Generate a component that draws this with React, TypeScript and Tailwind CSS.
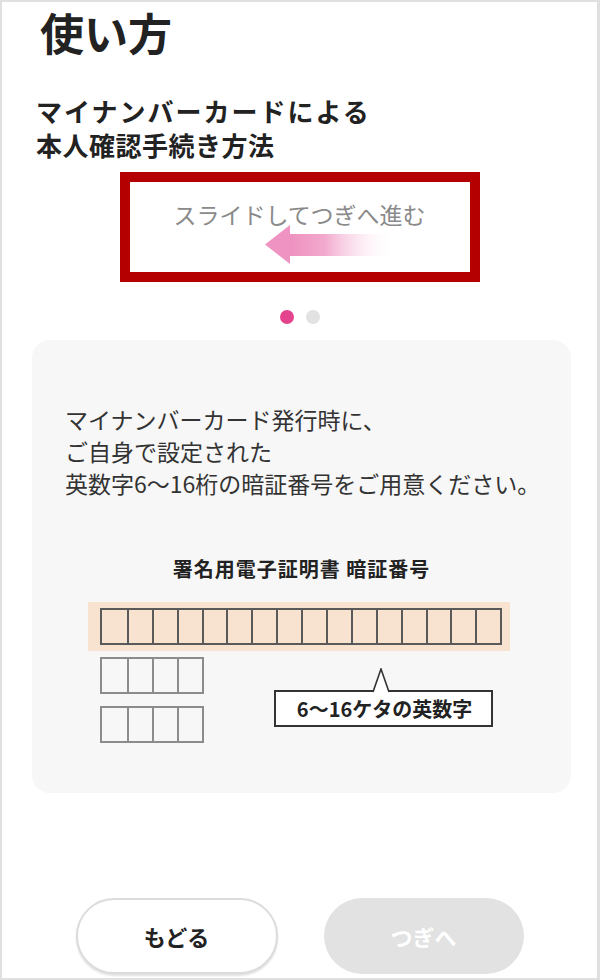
import React from 'react';

const font = { fontFamily: '"Noto Sans CJK JP", "Noto Sans", sans-serif' };

// row of square PIN cells
const PinRow: React.FC<{ count: number; tone: string }> = ({ count, tone }) => (
    <div className={`flex w-fit border-2 ${tone}`}>
        {Array.from({ length: count }).map((_, i) => (
            <div key={i} className={`h-[33px] w-[24.9px] ${i > 0 ? 'border-l-2' : ''} ${tone}`} />
        ))}
    </div>
);

const SwipeArrow: React.FC = () => (
    <svg width="130" height="40" viewBox="0 0 130 40">
        <defs>
            <linearGradient id="swipeFade" x1="0" y1="0" x2="1" y2="0">
                <stop offset="0" stopColor="#ee8fbf" />
                <stop offset="0.35" stopColor="#f2a9cd" />
                <stop offset="1" stopColor="#ffffff" stopOpacity="0" />
            </linearGradient>
        </defs>
        <rect x="22" y="9" width="108" height="22" fill="url(#swipeFade)" />
        <polygon points="0,19.5 25,0 25,39" fill="#ee93c2" />
    </svg>
);

export default function App() {
    return (
        <div style={font} className="w-[600px] h-[980px] bg-white border-2 border-r-[3px] border-[#e0e0e0] flex flex-col text-[#222]">
            <h1 className="pl-[38px] text-[44px] leading-[60px] font-bold">使い方</h1>

            <h2 className="pl-[34px] mt-[32px] text-[26px] leading-[34px] font-bold">
                <span className="tracking-[2px]">マイナンバーカードによる</span>
                <br />
                <span className="tracking-[0.5px]">本人確認手続き方法</span>
            </h2>

            <div className="mx-auto mt-[10px] w-[360px] h-[110px] border-[10px] border-[#b40000] flex flex-col">
                <p className="pt-[20px] text-center text-[23px] leading-[24px] text-[#8a8a8a]">スライドしてつぎへ進む</p>
                <div className="ml-[135px] -mt-[1px]">
                    <SwipeArrow />
                </div>
            </div>

            <div className="flex justify-center gap-[12px] mt-[28px]">
                <span className="w-[14px] h-[14px] rounded-full bg-[#e4448d]" />
                <span className="w-[14px] h-[14px] rounded-full bg-[#e2e2e2]" />
            </div>

            <div className="ml-[30px] mt-[16px] w-[539px] h-[453px] rounded-[18px] bg-[#f7f7f7] flex flex-col">
                <p className="pl-[33px] pt-[63px] text-[23px] leading-[32px] text-[#333]">
                    マイナンバーカード発行時に、
                    <br />
                    ご自身で設定された
                    <br />
                    英数字6〜16桁の暗証番号をご用意ください。
                </p>

                <p className="mt-[56px] text-center text-[20px] leading-[28px] font-bold tracking-[1px] text-[#222]">
                    署名用電子証明書 暗証番号
                </p>

                <div className="ml-[56px] mt-[19px] w-[422px]">
                    <div className="h-[49px] bg-[#f8e3d0] pl-[12px] pt-[6px]">
                        <PinRow count={16} tone="border-[#5a5a5a]" />
                    </div>

                    <div className="flex">
                        <div className="ml-[12px] mt-[6px] flex flex-col gap-[12px]">
                            <PinRow count={4} tone="border-[#8c8c8c]" />
                            <PinRow count={4} tone="border-[#8c8c8c]" />
                        </div>

                        <div className="relative ml-[70px] mt-[39px] w-[219px] h-[37px] bg-white border-2 border-[#333] flex items-center justify-center">
                            <svg className="absolute -top-[24px] left-[96px]" width="18" height="25" viewBox="0 0 18 25">
                                <polygon points="1,24 9,1 17,24" fill="white" />
                                <polyline points="1,24 9,1 17,24" fill="none" stroke="#333" strokeWidth="1.6" />
                            </svg>
                            <span className="pl-[3px] text-[20px] leading-none font-bold text-[#222]">6〜16ケタの英数字</span>
                        </div>
                    </div>
                </div>
            </div>

            <div className="flex justify-center gap-[46px] mt-[105px]">
                <button className="w-[202px] h-[76px] rounded-full bg-white border-2 border-[#dcdcdc] shadow-[0_2px_2px_rgba(0,0,0,0.12)] text-[22px] font-bold text-[#222]">
                    もどる
                </button>
                <button className="w-[200px] h-[76px] rounded-full bg-[#e2e2e2] text-[22px] font-bold text-white">
                    つぎへ
                </button>
            </div>
        </div>
    );
}
